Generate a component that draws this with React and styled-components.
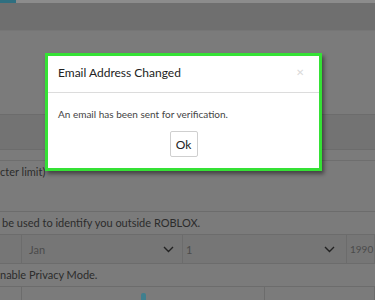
import React from "react";
import styled, { createGlobalStyle } from "styled-components";

const Global = createGlobalStyle`
  html, body { margin: 0; padding: 0; background: #7b7b7b; }
  body { font-family: "Lato", "Liberation Sans", sans-serif; }
`;

const Page = styled.div`
  position: relative;
  width: 375px;
  height: 300px;
  overflow: hidden;
  background: #7b7b7b;
`;

const TopStrip = styled.div`
  height: 3px;
  background: #8c8c8c;
  display: flex;
  span { width: 16px; background: #2f6f80; }
`;

const NavBand = styled.div`
  height: 27px;
  background: #6f6f6f;
  border-bottom: 1px solid #767676;
`;

const Gap = styled.div`
  height: ${p => p.h}px;
`;

const Band = styled.div`
  height: 34px;
  background: #737373;
  border-top: 1px solid #6c6c6c;
  border-bottom: 1px solid #6c6c6c;
`;

const ThinRow = styled.div`
  height: 10px;
  border-bottom: 1px solid #6e6e6e;
`;

const Hint = styled.div`
  height: ${p => p.h}px;
  font-size: 11px;
  color: #2c2c2c;
  padding-left: ${p => p.indent}px;
  line-height: ${p => p.h}px;
  white-space: nowrap;
  border-bottom: ${p => (p.line ? "1px solid #6c6c6c" : "none")};
  em { font-style: normal; color: #8a5a5a; }
`;

const SelectRow = styled.div`
  display: grid;
  grid-template-columns: 22px 161px 164px 1fr;
  height: 28px;
  border-bottom: 1px solid #6c6c6c;
`;

const Cell = styled.div`
  display: flex;
  align-items: center;
  justify-content: space-between;
  padding: 0 ${p => p.pr || 8}px 0 ${p => p.pl || 8}px;
  border-right: 1px solid #6c6c6c;
  background: #767676;
  font-size: ${p => p.fs || 11}px;
  color: #4b4b4b;
  white-space: nowrap;
  overflow: hidden;
`;

const BottomRow = styled.div`
  display: grid;
  grid-template-columns: 22px 243px 1fr;
  height: 16px;
  border-top: 1px solid #6c6c6c;
  div { border-right: 1px solid #6c6c6c; position: relative; }
`;

const Figure = styled.span`
  position: absolute;
  left: 119px;
  top: 6px;
  width: 5px;
  height: 9px;
  border-radius: 2px 2px 0 0;
  background: #3f7f8e;
`;

const Modal = styled.div`
  position: absolute;
  left: 45px;
  top: 53px;
  width: 277px;
  height: 118px;
  box-sizing: border-box;
  border: 3px solid #35e135;
  background: #ffffff;
  box-shadow: 2px 3px 4px rgba(0, 0, 0, 0.45);
  display: flex;
  flex-direction: column;
`;

const ModalHead = styled.div`
  height: 37px;
  border-bottom: 1px solid #dcdcdc;
  display: flex;
  align-items: center;
  justify-content: space-between;
  padding: 0 15px 4px 10px;
  box-sizing: border-box;
`;

const Title = styled.h3`
  margin: 0;
  font-size: 12px;
  font-weight: 400;
  color: #222222;
`;

const Close = styled.span`
  color: #dadada;
  font-size: 10px;
  line-height: 1;
`;

const ModalBody = styled.div`
  flex: 1;
  display: flex;
  flex-direction: column;
  padding: 15px 10px 0 10px;
`;

const Message = styled.p`
  margin: 0;
  font-size: 10px;
  color: #444444;
`;

const OkButton = styled.button`
  align-self: center;
  margin-top: 11px;
  width: 28px;
  height: 26px;
  padding: 0;
  border: 1px solid #cfcfcf;
  border-radius: 2px;
  background: #ffffff;
  font-family: inherit;
  font-size: 12px;
  color: #222222;
`;

function Chevron() {
  return (
    <svg width="11" height="7" viewBox="0 0 11 7">
      <path d="M1 1l4.5 4.5L10 1" fill="none" stroke="#222" strokeWidth="1.4" />
    </svg>
  );
}

export default function App() {
  return (
    <>
      <Global />
      <Page>
        <TopStrip><span /></TopStrip>
        <NavBand />
        <Gap h={83} />
        <Band />
        <ThinRow />
        <Hint h={22} indent={0}>cter limit)<em>*</em></Hint>
        <Hint h={28} indent={2} line />
        <Hint h={22} indent={2} line>be used to identify you outside ROBLOX.</Hint>
        <SelectRow>
          <Cell />
          <Cell pl={7}>Jan<Chevron /></Cell>
          <Cell pl={3} pr={11}>1<Chevron /></Cell>
          <Cell pl={3} pr={0} fs={10}>1990</Cell>
        </SelectRow>
        <Hint h={22} indent={0}>nable Privacy Mode.</Hint>
        <BottomRow>
          <div />
          <div><Figure /></div>
          <div />
        </BottomRow>

        <Modal>
          <ModalHead>
            <Title>Email Address Changed</Title>
            <Close>✕</Close>
          </ModalHead>
          <ModalBody>
            <Message>An email has been sent for verification.</Message>
            <OkButton>Ok</OkButton>
          </ModalBody>
        </Modal>
      </Page>
    </>
  );
}
